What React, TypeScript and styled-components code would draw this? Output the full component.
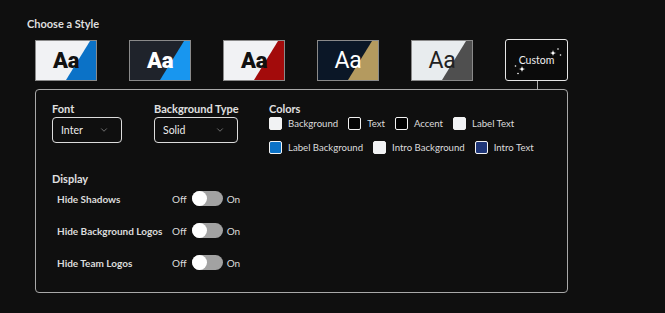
import React from "react";
import styled, { createGlobalStyle } from "styled-components";
import { ChevronDown } from "lucide-react";

//#region Styled components

const GlobalStyle = createGlobalStyle`
  body {
    margin: 0;
    background: #0f0f0f;
    font-family: Lato, "Open Sans", sans-serif;
    color: #e2e2e2;
  }
`;

const StyledPage = styled("div")`
  padding: 17px 0 0 27px;
  min-height: 313px;
  box-sizing: border-box;
`;

const StyledHeading = styled("h2")`
  margin: 0 0 10px;
  font-size: 11px;
  line-height: 13px;
  font-weight: 700;
  color: #dedede;
`;

const StyledSection = styled("div")`
  margin-left: 8px;
  width: 533px;
`;

const StyledTileRow = styled("div")`
  display: flex;
  gap: 32px;
  margin-bottom: 8px;
`;

const StyledTile = styled("div")<{ $base: string; $accent: string; $ink: string; $weight: number; $size: number }>`
  position: relative;
  width: 62px;
  height: 41px;
  box-sizing: border-box;
  border: 1px solid #8a8a8a;
  background: ${(p) => p.$base};
  display: flex;
  align-items: center;
  justify-content: center;
  overflow: hidden;
  &::before {
    content: "";
    position: absolute;
    inset: 0;
    background: ${(p) => p.$accent};
    clip-path: polygon(90% 0, 100% 0, 100% 100%, 50% 100%);
  }
  span {
    position: relative;
    font-family: Roboto, "Liberation Sans", sans-serif;
    font-weight: ${(p) => p.$weight};
    font-size: ${(p) => p.$size}px;
    color: ${(p) => p.$ink};
    letter-spacing: -0.3px;
  }
`;

const StyledCustomTile = styled("div")`
  position: relative;
  width: 63px;
  height: 42px;
  margin-top: -1px;
  box-sizing: border-box;
  border: 1px solid #e6e6e6;
  border-radius: 3px;
  background: #0b0b0b;
  display: flex;
  align-items: center;
  justify-content: center;
  font-size: 10.5px;
  color: #f0f0f0;
  &::after {
    content: "";
    position: absolute;
    left: 31px;
    top: 41px;
    width: 1px;
    height: 9px;
    background: #b0b0b0;
  }
  svg {
    position: absolute;
    inset: 0;
  }
`;

const StyledPanel = styled("div")`
  height: 204px;
  box-sizing: border-box;
  border: 1px solid #a9a9a9;
  border-radius: 4px;
  padding: 12px 16px;
`;

const StyledTopRow = styled("div")`
  display: flex;
`;

const StyledField = styled("div")<{ $width: number }>`
  width: ${(p) => p.$width}px;
  flex-shrink: 0;
  display: flex;
  flex-direction: column;
  gap: 2px;
`;

const StyledLabel = styled("div")`
  font-size: 11px;
  line-height: 13px;
  font-weight: 700;
  color: #e0e0e0;
`;

const StyledSelect = styled("div")<{ $width: number }>`
  width: ${(p) => p.$width}px;
  height: 26px;
  box-sizing: border-box;
  border: 1px solid #dcdcdc;
  border-radius: 4px;
  padding: 0 12px 0 8px;
  display: flex;
  align-items: center;
  justify-content: space-between;
  font-size: 10.5px;
  color: #ececec;
`;

const StyledColors = styled("div")`
  flex: 1;
  display: flex;
  flex-direction: column;
  gap: 2px;
`;

const StyledSwatchList = styled("div")`
  display: flex;
  flex-wrap: wrap;
  column-gap: 10px;
  row-gap: 11px;
  max-width: 275px;
`;

const StyledSwatchItem = styled("div")`
  display: flex;
  align-items: center;
  gap: 6px;
  font-size: 9.6px;
  line-height: 13px;
  color: #dcdcdc;
`;

const StyledSwatch = styled("span")<{ $color: string }>`
  width: 13px;
  height: 13px;
  box-sizing: border-box;
  border: 1px solid #f2f2f2;
  border-radius: 2px;
  background: ${(p) => p.$color};
`;

const StyledDisplay = styled("div")`
  margin-top: 18px;
  display: flex;
  flex-direction: column;
  gap: 6px;
`;

const StyledToggleList = styled("div")`
  display: flex;
  flex-direction: column;
  gap: 17px;
  padding-left: 5px;
`;

const StyledToggleRow = styled("div")`
  display: grid;
  grid-template-columns: 115px auto;
  align-items: center;
  height: 15px;
`;

const StyledToggleLabel = styled("span")`
  font-size: 10px;
  font-weight: 700;
  color: #dcdcdc;
`;

const StyledSwitchGroup = styled("div")`
  display: flex;
  align-items: center;
  gap: 4px;
  font-size: 10px;
  color: #dcdcdc;
`;

const StyledTrack = styled("span")`
  position: relative;
  width: 31px;
  height: 15px;
  margin-left: 1px;
  border-radius: 8px;
  background: #a2a2a2;
  &::after {
    content: "";
    position: absolute;
    left: 0;
    top: 0;
    width: 15px;
    height: 15px;
    border-radius: 50%;
    background: #ffffff;
  }
`;
//#endregion

const tiles = [
  { base: "#f1f2f4", accent: "#0b72c7", ink: "#111111", weight: 900, size: 22 },
  { base: "#1f232b", accent: "#1896ef", ink: "#ffffff", weight: 900, size: 22 },
  { base: "#f1f2f4", accent: "#a30b0b", ink: "#111111", weight: 900, size: 22 },
  { base: "#0b1727", accent: "#b49a5f", ink: "#ffffff", weight: 400, size: 23 },
  { base: "#e8ecee", accent: "#4f4f4f", ink: "#222222", weight: 400, size: 23 },
];

const swatches = [
  { name: "Background", color: "#f1f2f4" },
  { name: "Text", color: "#050505" },
  { name: "Accent", color: "#000000" },
  { name: "Label Text", color: "#f1f2f4" },
  { name: "Label Background", color: "#0b72c7" },
  { name: "Intro Background", color: "#f1f2f4" },
  { name: "Intro Text", color: "#1e3577" },
];

const toggles = ["Hide Shadows", "Hide Background Logos", "Hide Team Logos"];

const Sparkle: React.FC<{ x: number; y: number; r: number }> = ({ x, y, r }) => (
  <path
    d={`M${x} ${y - r}Q${x} ${y} ${x + r} ${y}Q${x} ${y} ${x} ${y + r}Q${x} ${y} ${x - r} ${y}Q${x} ${y} ${x} ${y - r}Z`}
    fill="#ffffff"
  />
);

const App: React.FC = () => {
  return (
    <StyledPage>
      <GlobalStyle />
      <StyledHeading>Choose a Style</StyledHeading>
      <StyledSection>
        <StyledTileRow>
          {tiles.map((t, i) => (
            <StyledTile key={i} $base={t.base} $accent={t.accent} $ink={t.ink} $weight={t.weight} $size={t.size}>
              <span>Aa</span>
            </StyledTile>
          ))}
          <StyledCustomTile>
            <svg width="63" height="42" viewBox="0 0 63 42">
              <Sparkle x={47} y={13} r={3.5} />
              <circle cx={52} cy={9} r={0.8} fill="#fff" />
              <circle cx={54.5} cy={15} r={0.8} fill="#fff" />
              <Sparkle x={16} y={29} r={3.5} />
              <circle cx={9.5} cy={26} r={0.8} fill="#fff" />
              <circle cx={12} cy={33.5} r={0.8} fill="#fff" />
            </svg>
            Custom
          </StyledCustomTile>
        </StyledTileRow>
        <StyledPanel>
          <StyledTopRow>
            <StyledField $width={102}>
              <StyledLabel>Font</StyledLabel>
              <StyledSelect $width={70}>
                Inter
                <ChevronDown size={10} color="#a8a8a8" strokeWidth={1.5} />
              </StyledSelect>
            </StyledField>
            <StyledField $width={115}>
              <StyledLabel>Background Type</StyledLabel>
              <StyledSelect $width={84}>
                Solid
                <ChevronDown size={10} color="#a8a8a8" strokeWidth={1.5} />
              </StyledSelect>
            </StyledField>
            <StyledColors>
              <StyledLabel>Colors</StyledLabel>
              <StyledSwatchList>
                {swatches.map((s) => (
                  <StyledSwatchItem key={s.name}>
                    <StyledSwatch $color={s.color} />
                    {s.name}
                  </StyledSwatchItem>
                ))}
              </StyledSwatchList>
            </StyledColors>
          </StyledTopRow>
          <StyledDisplay>
            <StyledLabel>Display</StyledLabel>
            <StyledToggleList>
              {toggles.map((name) => (
                <StyledToggleRow key={name}>
                  <StyledToggleLabel>{name}</StyledToggleLabel>
                  <StyledSwitchGroup>
                    Off
                    <StyledTrack />
                    On
                  </StyledSwitchGroup>
                </StyledToggleRow>
              ))}
            </StyledToggleList>
          </StyledDisplay>
        </StyledPanel>
      </StyledSection>
    </StyledPage>
  );
};

export default App;
